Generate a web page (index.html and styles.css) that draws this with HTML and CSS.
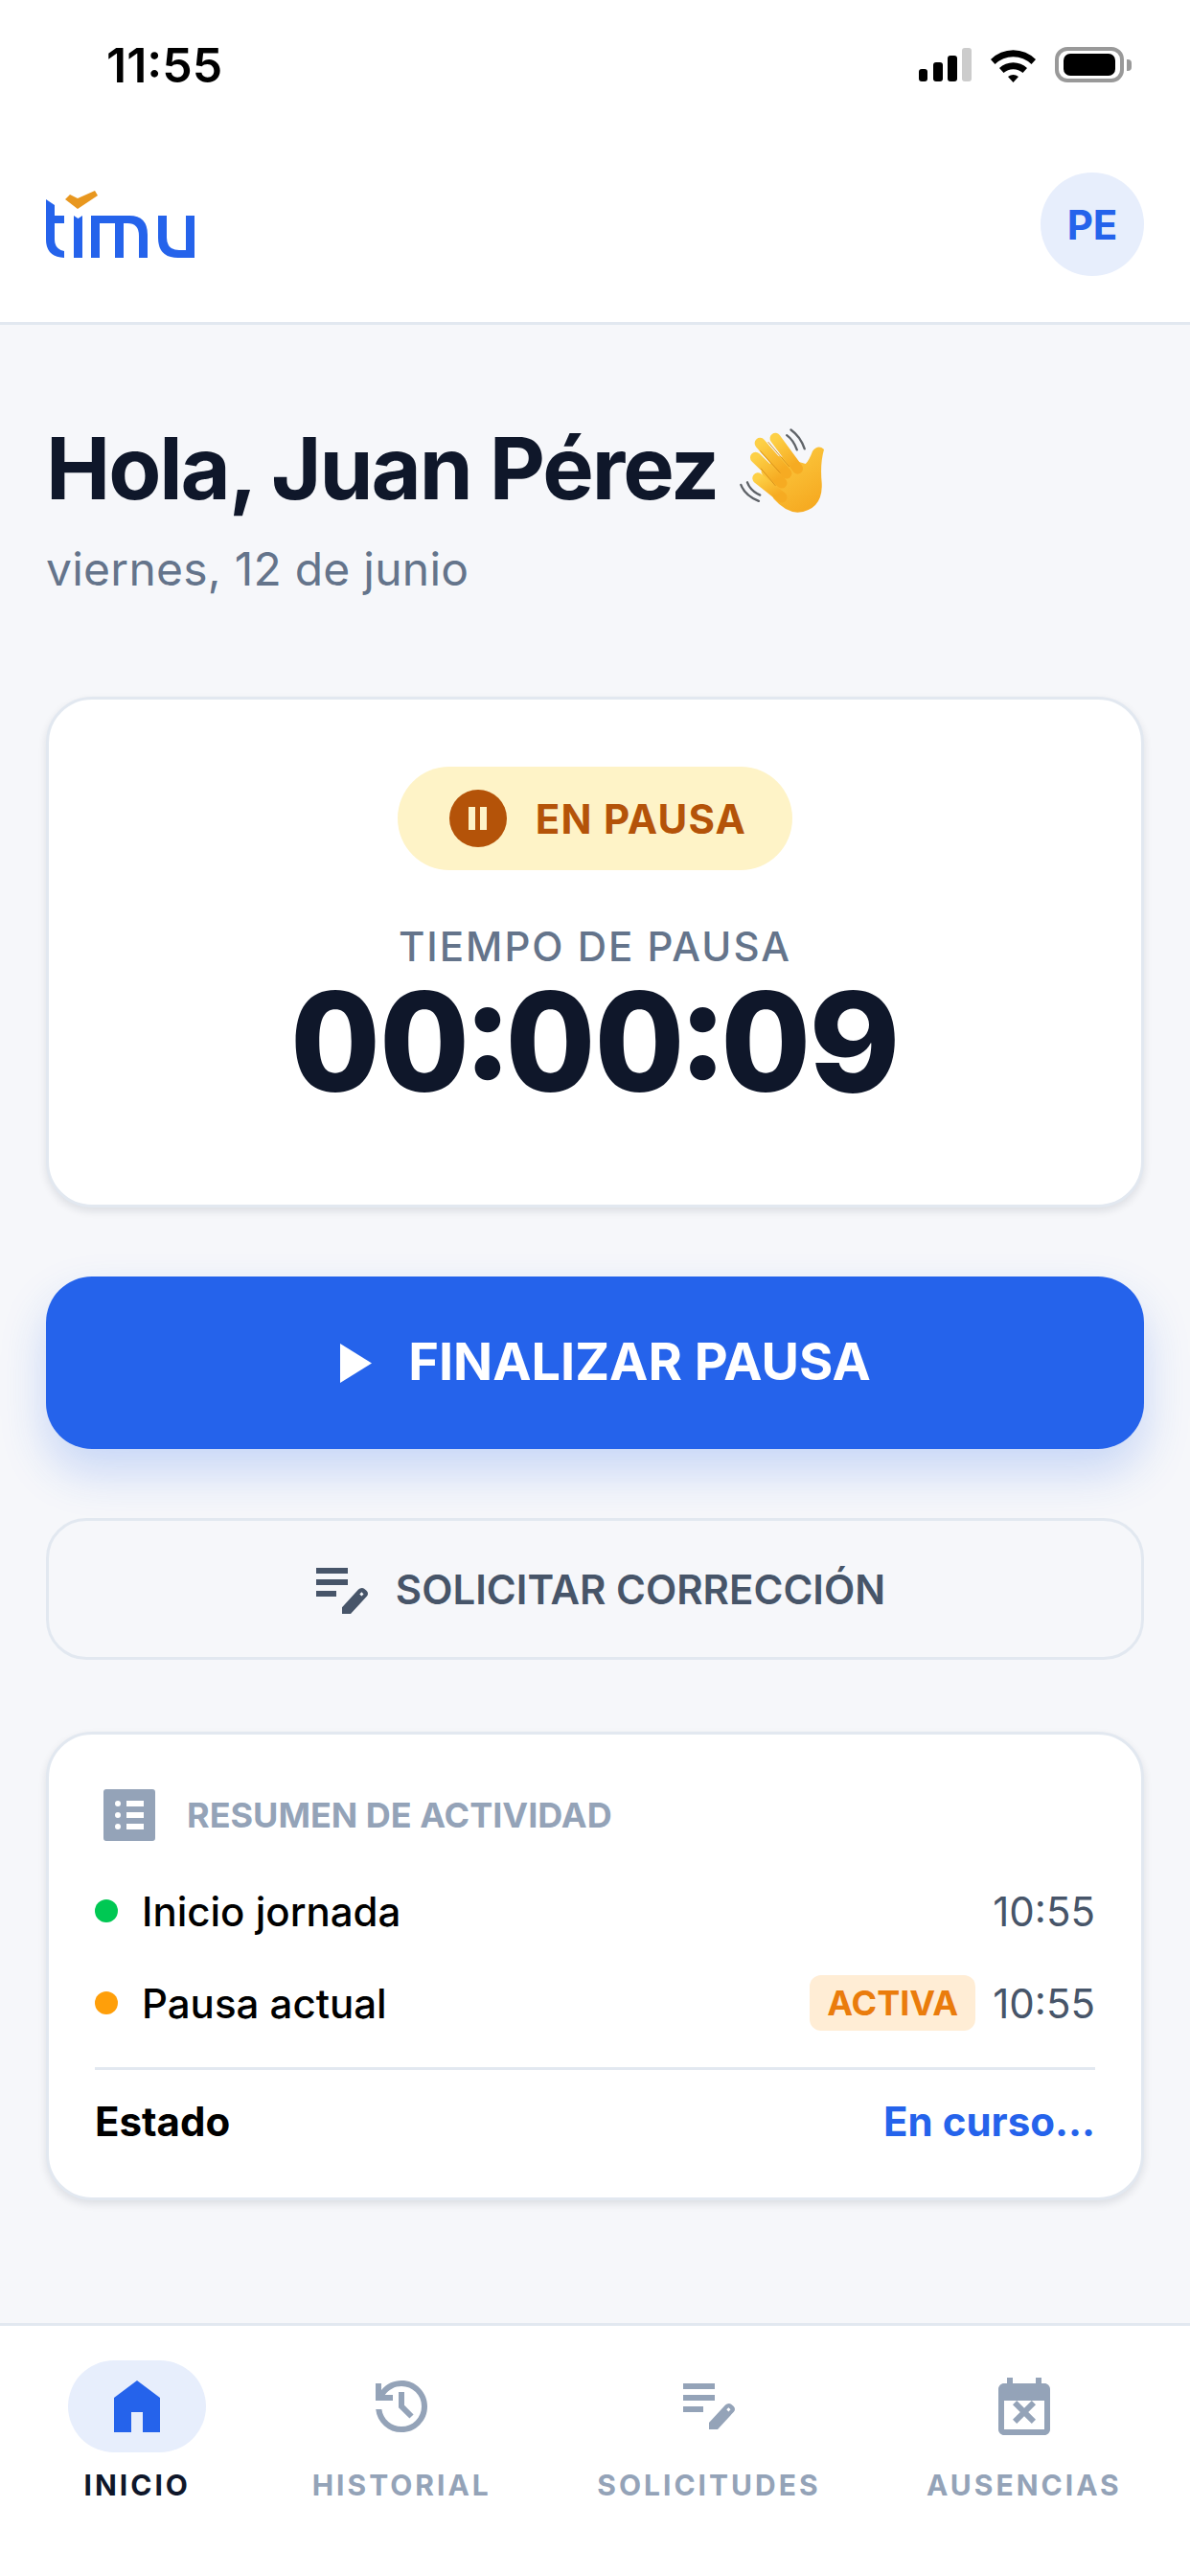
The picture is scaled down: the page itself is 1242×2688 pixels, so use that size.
FILE: index.html
```html
<!DOCTYPE html>
<html lang="es">
<head>
  <meta charset="UTF-8">
  <meta name="viewport" content="width=device-width, initial-scale=1.0">
  <title>Timu - Inicio</title>
  <link rel="stylesheet" href="styles.css">
</head>
<body>
  <div class="page">

    <!-- Status bar -->
    <div class="statusbar">
      <span class="clock">11:55</span>
      <div class="status-icons">
        <svg class="signal" width="55" height="35" viewBox="0 0 55 35">
          <rect x="0" y="22" width="9" height="13" rx="3" fill="#000"/>
          <rect x="15" y="15" width="10" height="20" rx="3" fill="#000"/>
          <rect x="30" y="8" width="10" height="27" rx="3" fill="#000"/>
          <rect x="45" y="0" width="10" height="35" rx="3" fill="#ccc"/>
        </svg>
        <svg class="wifi" width="47" height="37" viewBox="0 0 47 37">
          <path d="M0 13 A33 33 0 0 1 47 13 L42.500 18 A27 27 0 0 0 4.500 18 Z" fill="#000"/>
          <path d="M9 22 A21 21 0 0 1 38 22 L33.500 27 A15 15 0 0 0 13.500 27 Z" fill="#000"/>
          <path d="M18 31 A9 9 0 0 1 29 31 L23.500 37 Z" fill="#000"/>
        </svg>
        <div class="battery">
          <div class="battery-level"></div>
        </div>
      </div>
    </div>

    <!-- Header -->
    <header class="topbar">
      <svg class="logo" width="157" height="73" viewBox="48 197 157 73">
        <path d="M68 208 L73 203 L81 207 L99 199 L102 204 L81 218 Z" fill="#e8971f"/>
        <path d="M48 208 L57 214 V225 H67 V233 H57 V250 Q57 260 67 262 V269 Q48 268 48 250 Z" fill="#2563eb"/>
        <path d="M77 225 L81.500 228 L86 225 V269 H77 Z" fill="#2563eb"/>
        <path d="M95 225 H135 Q154 225 154 245 V269 H145 V246 Q145 233 133 233 H129 V269 H120 V233 H104 V269 H95 Z" fill="#2563eb"/>
        <path d="M165 225 H174 V248 Q174 261 187 261 H194 V225 H203 V269 H186 Q165 269 165 248 Z" fill="#2563eb"/>
      </svg>
      <div class="avatar">PE</div>
    </header>

    <main class="content">
      <div class="greeting">
        <h1>Hola, Juan Pérez</h1>
        <!-- waving hand -->
        <svg class="wave" width="93" height="95" viewBox="90 70 280 285">
          <defs>
            <linearGradient id="handFill" x1="0" y1="0" x2="0.6" y2="1">
              <stop offset="0" stop-color="#fdd046"/>
              <stop offset="1" stop-color="#f6ab22"/>
            </linearGradient>
          </defs>
          <g fill="none" stroke="#5f6368" stroke-width="7" stroke-linecap="round">
            <path d="M254 83 Q284 104 297 143"/>
            <path d="M241 100 Q262 115 273 146"/>
            <path d="M97 256 Q110 290 153 307"/>
            <path d="M117 248 Q127 275 157 288"/>
          </g>
          <path d="M160 215 L215 165 L300 190 Q312 178 322 150 Q340 128 358 145 Q345 190 351 250 Q355 335 275 343 Q235 340 200 300 Z" fill="url(#handFill)"/>
          <g fill="none" stroke="url(#handFill)" stroke-width="34" stroke-linecap="round">
            <line x1="205" y1="110" x2="275" y2="205"/>
            <line x1="157" y1="125" x2="240" y2="220"/>
            <line x1="143" y1="170" x2="225" y2="250"/>
            <line x1="150" y1="235" x2="225" y2="295"/>
          </g>
          <g fill="none" stroke="#d9931c" stroke-width="3" stroke-linecap="round">
            <line x1="183" y1="122" x2="248" y2="198"/>
            <line x1="158" y1="150" x2="220" y2="218"/>
            <line x1="160" y1="205" x2="205" y2="258"/>
          </g>
        </svg>
      </div>
      <p class="date">viernes, 12 de junio</p>

      <!-- Timer -->
      <section class="card timer-card">
        <div class="status-pill">
          <span class="pause-dot"><i></i><i></i></span>
          <span>EN PAUSA</span>
        </div>
        <div class="timer-label">TIEMPO DE PAUSA</div>
        <div class="timer">00:00:09</div>
      </section>

      <button class="btn-primary">
        <svg width="33" height="41" viewBox="0 0 33 41"><path d="M0 0 L33 20.500 L0 41 Z" fill="#fff"/></svg>
        FINALIZAR PAUSA
      </button>

      <button class="btn-secondary">
        <svg width="72" height="72" viewBox="0 1.300 24 24">
          <path fill="#475569" fill-rule="evenodd" d="M3 6h11v2H3zM3 10h11v2H3zM3 14h7v2H3zM12 22v-2.300l5.700-6.200q.5-.5 1.200-.5.500 0 .9.300l.7.600q.5.500.5 1.100 0 .5-.4.900L15 22zM18.800 14.400l-.7.700.7.700.7-.7z"/>
        </svg>
        SOLICITAR CORRECCIÓN
      </button>

      <!-- Activity summary -->
      <section class="card summary">
        <div class="summary-head">
          <svg width="72" height="72" viewBox="0 0 24 24">
            <path fill="#94a3b8" fill-rule="evenodd" d="M4 3h16a1 1 0 0 1 1 1v16a1 1 0 0 1-1 1H4a1 1 0 0 1-1-1V4a1 1 0 0 1 1-1zM11 7v2h6V7zM11 11v2h6v-2zM11 15v2h6v-2zM8 7a1 1 0 1 0 0 2 1 1 0 0 0 0-2zM8 11a1 1 0 1 0 0 2 1 1 0 0 0 0-2zM8 15a1 1 0 1 0 0 2 1 1 0 0 0 0-2z"/>
          </svg>
          <span>RESUMEN DE ACTIVIDAD</span>
        </div>
        <div class="row">
          <span class="dot dot-green"></span>
          <span class="row-name">Inicio jornada</span>
          <span class="row-time">10:55</span>
        </div>
        <div class="row">
          <span class="dot dot-orange"></span>
          <span class="row-name">Pausa actual</span>
          <span class="badge">ACTIVA</span>
          <span class="row-time">10:55</span>
        </div>
        <div class="summary-foot">
          <span>Estado</span>
          <span class="running">En curso...</span>
        </div>
      </section>
    </main>

    <!-- Bottom navigation -->
    <nav class="tabbar">
      <a class="tab active">
        <span class="tab-icon">
          <svg width="72" height="72" viewBox="0 0 24 24"><path fill="#2563eb" d="M4 21V9l8-6 8 6v12h-6v-7h-4v7z"/></svg>
        </span>
        <span class="tab-label">INICIO</span>
      </a>
      <a class="tab">
        <span class="tab-icon">
          <svg width="72" height="72" viewBox="0 0 24 24"><path fill="#94a3b8" d="M12 21c-2.300 0-4.300-.76-6-2.280-1.700-1.530-2.680-3.430-2.930-5.720h2.050c.23 1.730 1 3.170 2.310 4.300C8.740 18.430 10.270 19 12 19c1.950 0 3.600-.68 4.960-2.040C18.320 15.600 19 13.950 19 12s-.68-3.600-2.040-4.960C15.600 5.680 13.950 5 12 5c-1.150 0-2.230.27-3.230.8-1 .53-1.840 1.270-2.520 2.200H9v2H3V4h2v2.350c.85-1.070 1.890-1.890 3.110-2.480C9.340 3.290 10.630 3 12 3c2.500 0 4.620.87 6.370 2.630C20.130 7.380 21 9.500 21 12s-.87 4.630-2.630 6.380C16.620 20.130 14.500 21 12 21zm2.800-4.800L11 12.400V7h2v4.600l3.200 3.200-1.400 1.400z"/></svg>
        </span>
        <span class="tab-label">HISTORIAL</span>
      </a>
      <a class="tab">
        <span class="tab-icon">
          <svg width="72" height="72" viewBox="0 2 24 24"><path fill="#94a3b8" fill-rule="evenodd" d="M3 6h11v2H3zM3 10h11v2H3zM3 14h7v2H3zM12 22v-2.300l5.700-6.200q.5-.5 1.200-.5.500 0 .9.300l.7.600q.5.500.5 1.100 0 .5-.4.900L15 22zM18.800 14.400l-.7.700.7.700.7-.7z"/></svg>
        </span>
        <span class="tab-label">SOLICITUDES</span>
      </a>
      <a class="tab">
        <span class="tab-icon">
          <svg width="72" height="72" viewBox="0 0 24 24"><path fill="#94a3b8" d="M9.400 18L8 16.600l2.600-2.600L8 11.400 9.400 10l2.600 2.600 2.600-2.600 1.400 1.400-2.600 2.600 2.600 2.600-1.400 1.400-2.600-2.600L9.400 18zM5 22c-.55 0-1.020-.2-1.410-.59C3.200 21.020 3 20.550 3 20V6c0-.55.2-1.020.59-1.410C3.980 4.200 4.450 4 5 4h1V2h2v2h8V2h2v2h1c.55 0 1.020.2 1.410.59.39.39.59.86.59 1.410v14c0 .55-.2 1.020-.59 1.410-.39.39-.86.59-1.410.59H5zm0-2h14V10H5v10z"/></svg>
        </span>
        <span class="tab-label">AUSENCIAS</span>
      </a>
    </nav>
  </div>
</body>
</html>
```

FILE: styles.css
```css
* {
  box-sizing: border-box;
}

body {
  margin: 0;
  font-family: Inter, "Noto Sans", sans-serif;
  background: #f6f7fa;
  color: #0f172a;
}

.page {
  width: 1242px;
  height: 2688px;
  display: flex;
  flex-direction: column;
  overflow: hidden;
}

/* status bar */
.statusbar {
  height: 132px;
  background: #fff;
  display: flex;
  justify-content: space-between;
  align-items: center;
  padding: 0 69px 0 111px;
}

.clock {
  font-size: 50px;
  font-weight: 600;
  color: #000;
  position: relative;
  top: 2px;
}

.status-icons {
  display: flex;
  align-items: center;
  gap: 20px;
  padding-top: 2px;
}

.battery {
  width: 72px;
  height: 37px;
  border: 4px solid #999;
  border-radius: 13px;
  padding: 3px 5px;
  position: relative;
}

.battery::after {
  content: "";
  position: absolute;
  right: -12px;
  top: 9px;
  width: 5px;
  height: 12px;
  background: #999;
  border-radius: 0 4px 4px 0;
}

.battery-level {
  height: 100%;
  background: #000;
  border-radius: 7px;
}

/* header */
.topbar {
  height: 207px;
  background: #fff;
  border-bottom: 3px solid #e2e8f0;
  display: flex;
  justify-content: space-between;
  align-items: center;
  padding: 0 48px 0 48px;
}

.logo {
  position: relative;
  top: -1px;
}

.avatar {
  width: 108px;
  height: 108px;
  border-radius: 50%;
  background: #e7eefc;
  color: #2563eb;
  font-size: 42px;
  font-weight: 700;
  display: flex;
  align-items: center;
  justify-content: center;
}

/* main */
.content {
  flex: 1;
  padding: 96px 48px 0;
}

.greeting {
  display: flex;
  align-items: center;
  gap: 22px;
  height: 108px;
}

.greeting h1 {
  margin: 0;
  font-size: 90px;
  line-height: 108px;
  font-weight: 700;
  letter-spacing: -2.100px;
}

.wave {
  margin-top: 4px;
}

.date {
  margin: 18px 0 0;
  font-size: 48px;
  line-height: 66px;
  letter-spacing: 0.250px;
  color: #64748b;
}

.card {
  background: #fff;
  border: 3px solid #e2e8f0;
  border-radius: 48px;
  box-shadow: 0 4px 9px rgba(15, 23, 42, 0.11);
}

.timer-card {
  margin-top: 100px;
  height: 533px;
  padding-top: 70px;
  display: flex;
  flex-direction: column;
  align-items: center;
}

.status-pill {
  width: 412px;
  height: 108px;
  padding-left: 6px;
  border-radius: 54px;
  background: #fef3c7;
  color: #b45309;
  font-size: 42px;
  font-weight: 700;
  letter-spacing: 1.200px;
  display: flex;
  align-items: center;
  justify-content: center;
  gap: 30px;
}

.pause-dot {
  width: 60px;
  height: 60px;
  border-radius: 50%;
  background: #b45309;
  display: flex;
  align-items: center;
  justify-content: center;
  gap: 5px;
}

.pause-dot i {
  width: 7px;
  height: 24px;
  background: #fef3c7;
}

.timer-label {
  margin-top: 56px;
  font-size: 42px;
  line-height: 48px;
  font-weight: 500;
  letter-spacing: 2px;
  color: #64748b;
}

.timer {
  margin-top: 3px;
  font-size: 144px;
  line-height: 144px;
  font-weight: 800;
  color: #0f172a;
  font-variant-numeric: tabular-nums;
}

.btn-primary,
.btn-secondary {
  width: 100%;
  display: flex;
  align-items: center;
  justify-content: center;
  font-family: inherit;
}

.btn-primary {
  height: 180px;
  margin-top: 72px;
  padding: 0 0 4px 22px;
  border: 0;
  border-radius: 48px;
  background: #2563eb;
  color: #fff;
  font-size: 54px;
  font-weight: 700;
  gap: 38px;
  box-shadow: 0 24px 48px rgba(37, 99, 235, 0.22);
}

.btn-primary svg {
  margin-top: 4px;
}

.btn-secondary {
  height: 148px;
  margin-top: 72px;
  padding: 0 0 0 3px;
  border: 3px solid #e2e8f0;
  border-radius: 42px;
  background: transparent;
  color: #475569;
  font-size: 42px;
  font-weight: 600;
  gap: 20px;
}

/* summary card */
.summary {
  margin-top: 75px;
  padding: 48px 48px 50px;
}

.summary-head {
  display: flex;
  align-items: center;
  gap: 24px;
  height: 72px;
  font-size: 36px;
  font-weight: 700;
  color: #94a3b8;
}

.row {
  display: flex;
  align-items: center;
  height: 60px;
  margin-top: 34px;
  font-size: 42px;
  font-weight: 500;
  color: #000;
}

.row + .row {
  margin-top: 36px;
}

.dot {
  width: 24px;
  height: 24px;
  border-radius: 50%;
  margin-right: 25px;
}

.dot-green {
  background: #00c853;
}

.dot-orange {
  background: #ff9f0a;
}

.row-name {
  flex: 1;
}

.row-time {
  font-weight: 400;
  color: #475569;
}

.badge {
  height: 58px;
  line-height: 58px;
  padding: 0 18px;
  margin-right: 18px;
  border-radius: 12px;
  background: #ffedd5;
  color: #ea7c0c;
  font-size: 36px;
  font-weight: 700;
}

.summary-foot {
  display: flex;
  justify-content: space-between;
  align-items: center;
  margin-top: 37px;
  border-top: 3px solid #e2e8f0;
  padding-top: 23px;
  height: 86px;
  font-size: 42px;
  font-weight: 700;
  color: #000;
}

.running {
  color: #2563eb;
}

/* bottom navigation */
.tabbar {
  height: 264px;
  background: #fff;
  border-top: 3px solid #e2e8f0;
  display: flex;
  justify-content: space-around;
  align-items: flex-start;
  padding: 36px 16px 0;
}

.tab {
  display: flex;
  flex-direction: column;
  align-items: center;
}

.tab-icon {
  height: 96px;
  display: flex;
  align-items: center;
  justify-content: center;
}

.tab.active .tab-icon {
  width: 144px;
  border-radius: 48px;
  background: #e7eefc;
}

.tab-label {
  margin-top: 16px;
  font-size: 30px;
  line-height: 36px;
  font-weight: 700;
  letter-spacing: 3px;
  color: #94a3b8;
}

.tab.active .tab-label {
  color: #0f172a;
}
```
